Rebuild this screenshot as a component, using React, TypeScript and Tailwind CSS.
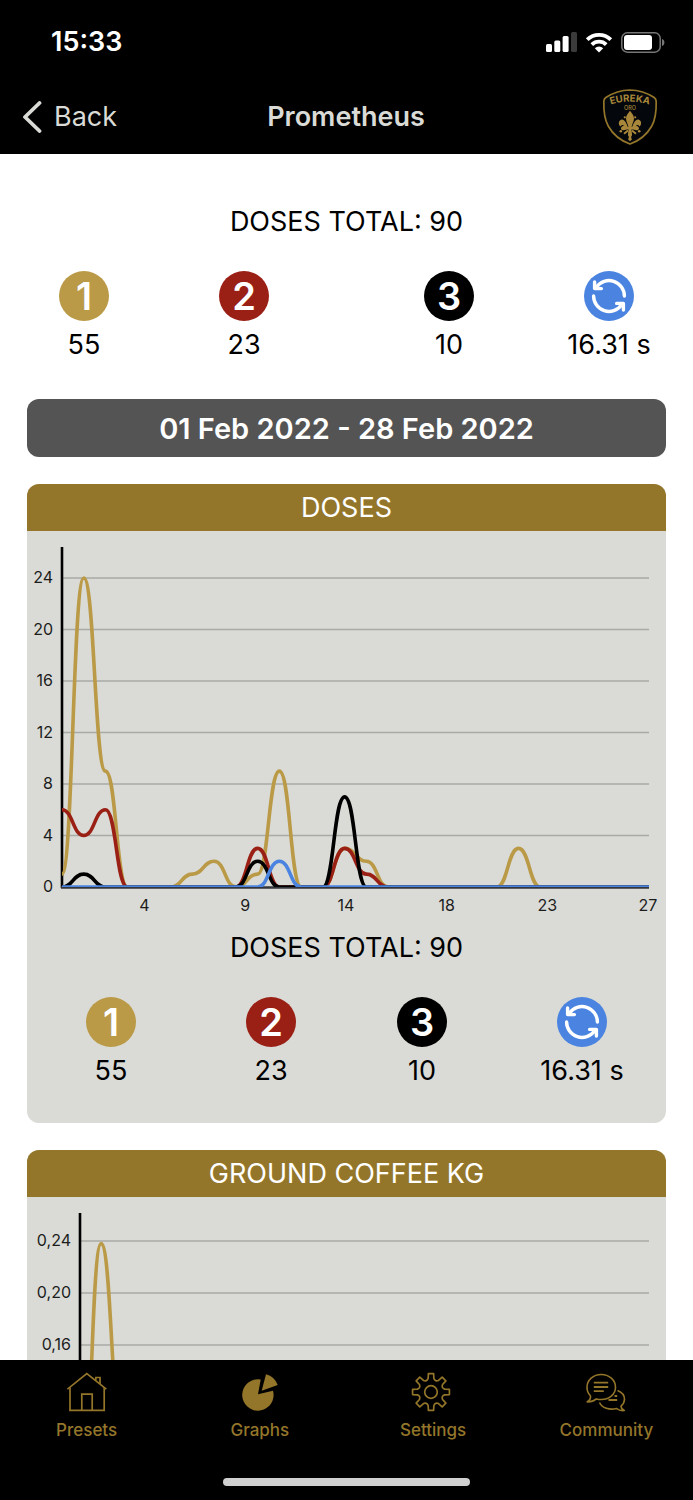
import type { ReactNode } from "react";

const GOLD = "#94762a";

type Series = { color: string; values: number[] };

// 28 days, only the days with a value are listed
const days = (filled: Record<number, number>) =>
  Array.from({ length: 28 }, (_, i) => filled[i] ?? 0);

const doses: Series[] = [
  {
    color: "#ba9a46",
    values: days({ 0: 1, 1: 24, 2: 9, 6: 1, 7: 2, 9: 1, 10: 9, 13: 3, 14: 2, 21: 3 }),
  },
  { color: "#9a1f15", values: days({ 0: 6, 1: 4, 2: 6, 9: 3, 13: 3, 14: 1 }) },
  { color: "#000000", values: days({ 1: 1, 9: 2, 13: 7 }) },
  { color: "#4a84e0", values: days({ 10: 2 }) },
];

const groundCoffee: Series[] = [
  {
    color: "#ba9a46",
    values: days({ 0: 0.01, 1: 0.238, 2: 0.09, 6: 0.01, 7: 0.02, 9: 0.01, 10: 0.09, 13: 0.03, 14: 0.02, 21: 0.03 }),
  },
];

const xLabels = ["4", "9", "14", "18", "23", "27"];

type ChartProps = {
  id: string;
  title: string;
  left: number;
  top: number;
  max: number;
  ticks: string[];
  series: Series[];
};

const Chart = ({ id, title, left, top, max, ticks, series }: ChartProps) => {
  const right = 622;
  const bottom = 356;
  const step = (right - left) / 27;
  const y = (v: number) => bottom - (v / max) * (bottom - top);

  const path = (values: number[]) =>
    values
      .map((v, i) => {
        const x = left + i * step;
        if (i === 0) return `M${x} ${y(v)}`;
        const mid = x - step / 2;
        return `C${mid} ${y(values[i - 1])} ${mid} ${y(v)} ${x} ${y(v)}`;
      })
      .join("");

  return (
    <svg viewBox="0 0 639 399" className="block w-full" role="img" aria-label={title}>
      <clipPath id={id}>
        <rect x={left} y="0" width={right - left} height={bottom} />
      </clipPath>
      {ticks.map((tick, i) => {
        const ty = bottom - ((bottom - top) / 6) * i;
        return (
          <g key={tick}>
            {i > 0 && (
              <line x1={left} x2={right} y1={ty} y2={ty} stroke="#a9aaa6" strokeWidth="1.3" />
            )}
            <text x={left - 9} y={ty + 5} textAnchor="end" fontSize="16" fill="#1c1c1c">
              {tick}
            </text>
          </g>
        );
      })}
      <path d={`M${left} 16V${bottom + 1}`} stroke="#000" strokeWidth="2.6" />
      <path d={`M${left - 1} ${bottom + 0.5}H${right}`} stroke="#33363c" strokeWidth="2.4" />
      <g clipPath={`url(#${id})`} fill="none" strokeWidth="3.6">
        {series.map((s) => (
          <path key={s.color} d={path(s.values)} stroke={s.color} />
        ))}
      </g>
      {xLabels.map((label, i) => (
        <text
          key={label}
          x={621 - (5 - i) * 100.7}
          y="380"
          textAnchor="middle"
          fontSize="16"
          fill="#1c1c1c"
        >
          {label}
        </text>
      ))}
    </svg>
  );
};

const RefreshIcon = () => (
  <svg
    viewBox="0 0 50 50"
    className="size-[50px]"
    fill="none"
    stroke="#fff"
    strokeWidth="3.4"
    strokeLinecap="round"
    strokeLinejoin="round"
    aria-hidden="true"
  >
    <path d="M40.4 25A15.4 15.4 0 0 0 12.5 16" />
    <path d="M10.600 11v6.600h6.800" />
    <path d="M9.600 25A15.4 15.4 0 0 0 37.500 34" />
    <path d="M39.400 39v-6.600h-6.800" />
  </svg>
);

const Stat = ({ color, icon, value }: { color: string; icon: ReactNode; value: string }) => (
  <div className="flex w-[88px] flex-col items-center gap-1.5">
    <div
      className={`flex size-[50px] items-center justify-center rounded-full text-[38px] font-semibold text-white ${color}`}
    >
      {icon}
    </div>
    <span className="leading-9 whitespace-nowrap">{value}</span>
  </div>
);

const Summary = () => (
  <div className="text-[27px] text-black">
    <p className="text-center leading-9">DOSES TOTAL: 90</p>
    <div className="mt-[31px] flex justify-between px-10">
      <div className="flex w-[248px] justify-between">
        <Stat color="bg-[#ba9a46]" icon="1" value="55" />
        <Stat color="bg-[#9a1f15]" icon="2" value="23" />
      </div>
      <div className="flex w-[248px] justify-between">
        <Stat color="bg-black" icon="3" value="10" />
        <Stat color="bg-[#4a84e0]" icon={<RefreshIcon />} value="16.31 s" />
      </div>
    </div>
  </div>
);

const Card = ({ title, children }: { title: string; children: ReactNode }) => (
  <section className="mx-[27px] mt-[27px] overflow-hidden rounded-xl bg-[#dadbd6] pb-[34px]">
    <h2 className="flex h-[47px] items-center justify-center bg-[#94762a] pt-0.5 text-[27px] text-white">
      {title}
    </h2>
    {children}
  </section>
);

const StatusBar = () => (
  <div className="flex h-[84px] items-center justify-between pr-7 pl-[51px]">
    <span className="text-[27px] font-semibold text-white">15:33</span>
    <div className="flex items-center gap-2">
      <svg viewBox="0 0 31 20" className="h-5 w-[31px]" fill="#fff" aria-hidden="true">
        <rect x="0" y="12" width="6" height="8" rx="1.5" />
        <rect x="8.3" y="8.5" width="6" height="11.5" rx="1.5" />
        <rect x="16.6" y="4" width="6" height="16" rx="1.5" />
        <rect x="25" y="0" width="6" height="20" rx="1.5" fill="#3b3b3b" />
      </svg>
      <svg viewBox="0 0 28 21" className="h-[21px] w-7" fill="none" aria-hidden="true">
        <g stroke="#fff" strokeWidth="3.8">
          <path d="M2.2 7.7a17 17 0 0 1 23.6 0" />
          <path d="M6.8 12.6a10.4 10.4 0 0 1 14.4 0" />
        </g>
        <path d="M14 20.6l-4.2-4.3a6 6 0 0 1 8.4 0z" fill="#fff" />
      </svg>
      <svg viewBox="0 0 44 21" className="h-[21px] w-11" aria-hidden="true">
        <rect x="0.8" y="0.8" width="38.4" height="19.4" rx="5.5" fill="none" stroke="#767676" strokeWidth="1.5" />
        <rect x="3" y="3" width="28" height="15" rx="3" fill="#fff" />
        <path d="M41 7c1.6.5 2.4 1.8 2.4 3.5s-.8 3-2.4 3.5z" fill="#767676" />
      </svg>
    </div>
  </div>
);

const Shield = () => (
  <svg viewBox="0 0 56 58" className="h-[58px] w-14" fill="#a8873a" role="img" aria-label="Eureka Oro">
    <path
      d="M28 2C19 2.2 10 5.5 3.8 9.5C2.2 10.6 1.8 11.6 1.8 13.5C1.6 22 2.4 31 6.2 38C11 46.5 18 52.5 28 56C38 52.5 45 46.5 49.8 38C53.6 31 54.4 22 54.2 13.5C54.2 11.6 53.8 10.6 52.2 9.5C46 5.5 37 2.2 28 2Z"
      fill="#04070b"
      stroke="#94762a"
      strokeWidth="1.7"
    />
    <path id="crest" d="M6 17.600Q28 9.600 50 17.600" fill="none" />
    <text fontSize="9.6" fontWeight="700" textAnchor="middle">
      <textPath href="#crest" startOffset="50%">
        EUREKA
      </textPath>
    </text>
    <text x="28" y="21.6" fontSize="5.5" fontWeight="500" textAnchor="middle">
      ORO
    </text>
    <path d="M28 22.800C30.500 26 32 28 32 30.500C32 33.500 30 36 29.600 39H26.400C26 36 24 33.500 24 30.500C24 28 25.500 26 28 22.800Z" />
    <path d="M26.200 40C24.500 35 22.500 31 19.600 31.500C16.400 32.200 16 36.800 18.500 38.400C19.600 36.800 21.400 36.600 22.300 37.500C19.500 38 17.800 40.500 20 42C22.500 42.800 24.500 41.500 26.200 40Z" />
    <path d="M29.800 40C31.500 35 33.500 31 36.400 31.500C39.600 32.200 40 36.800 37.500 38.400C36.400 36.800 34.600 36.600 33.700 37.500C36.500 38 38.200 40.500 36 42C33.500 42.800 31.500 41.500 29.800 40Z" />
    <path d="M22 39h12v2.500h-12z" />
    <path d="M26.600 41h2.800l.7 6-1 2 .8 2.600L28 53.300l-1.900-1.700.8-2.600-1-2z" />
    <path d="M26 42.500l-4 3.300M30 42.500l4 3.300" stroke="#a8873a" strokeWidth="2" />
    <circle cx="18.800" cy="43.200" r="1.300" />
    <circle cx="37.200" cy="43.200" r="1.300" />
    <circle cx="22.800" cy="29.300" r="1.100" />
    <circle cx="33.200" cy="29.300" r="1.100" />
  </svg>
);

const NavBar = () => (
  <nav className="grid h-[68px] grid-cols-3 items-center pr-[35px] pb-0.5 pl-[22px] text-[27px] text-[#dadbd6]">
    <button type="button" className="flex items-center gap-3 justify-self-start">
      <svg
        viewBox="0 0 20 32"
        className="h-8 w-5"
        fill="none"
        stroke="currentColor"
        strokeWidth="3.8"
        strokeLinecap="round"
        strokeLinejoin="round"
        aria-hidden="true"
      >
        <path d="M17.5 2L3 16l14.5 14" />
      </svg>
      Back
    </button>
    <h1 className="justify-self-center pl-3 font-semibold">Prometheus</h1>
    <div className="justify-self-end">
      <Shield />
    </div>
  </nav>
);

const HomeIcon = () => (
  <svg viewBox="0 0 40 40" className="size-10" fill="none" stroke={GOLD} strokeWidth="1.7" aria-hidden="true">
    <path d="M.4 17.2L19.800 1.600L39.300 17.200" />
    <path d="M3 15.500V38.300H37.200V15.500" />
    <path d="M14.800 38.300V22.200H25.200V38.300" />
    <path d="M28.800 8.500V5.500H33V12" />
  </svg>
);

const PieIcon = () => (
  <svg viewBox="0 0 40 40" className="size-10" fill={GOLD} aria-hidden="true">
    <path d="M18 22.3L20.700 7.500A15.700 15.700 0 1 0 33 18.700Z" />
    <path d="M21.700 18.800L26 2.200A17 17 0 0 1 37.700 13Z" />
  </svg>
);

const gearPath = () => {
  const pt = (deg: number, r: number) => {
    const a = (deg * Math.PI) / 180;
    return `${(18 + r * Math.sin(a)).toFixed(2)} ${(20 - r * Math.cos(a)).toFixed(2)}`;
  };
  let d = "";
  for (let i = 0; i < 8; i++) {
    const c = i * 45;
    d += `${i === 0 ? "M" : "L"}${pt(c - 8, 18.6)}L${pt(c + 8, 18.6)}L${pt(c + 12, 13.8)}`;
    d += `Q${pt(c + 22.5, 11)} ${pt(c + 33, 13.8)}`;
  }
  return d + "Z";
};

const GearIcon = () => (
  <svg viewBox="0 0 40 40" className="size-10 overflow-visible" fill="none" stroke={GOLD} strokeWidth="1.7" strokeLinejoin="round" aria-hidden="true">
    <path d={gearPath()} />
    <circle cx="18" cy="20" r="6.3" />
  </svg>
);

const ChatIcon = () => (
  <svg viewBox="0 0 40 40" className="size-10" fill="none" stroke={GOLD} strokeWidth="1.6" strokeLinejoin="round" aria-hidden="true">
    <path d="M4.500 24C2.300 21.700 1 18.600 1 15.300C1 8 7.400 2.500 15.200 2.500S29.500 8 29.500 15.300S23 27.500 15.200 27.500C13.500 27.500 11.800 27.300 10.300 26.900C7.500 29.300 4.500 30.100 1.100 29.900C3.700 28.500 4.800 26.500 4.500 24Z" />
    <path d="M31.500 18.500C35.500 20 38.500 23.500 38.500 27.300C38.500 30 37.200 32.300 35 34.200C35.100 36.200 36.200 37.500 38.300 38.500C35 39 32.500 38 30.700 36.500C23.500 38.200 16 36.200 13.500 30.500" />
    <path d="M7.800 10.700H22.200M7.800 15H22.200M7.800 19.200H17.800" strokeWidth="1.8" />
    <path d="M28.500 24H31.200M22.500 28H31.200" strokeWidth="1.8" />
  </svg>
);

const tabs = [
  { label: "Presets", icon: <HomeIcon /> },
  { label: "Graphs", icon: <PieIcon /> },
  { label: "Settings", icon: <GearIcon /> },
  { label: "Community", icon: <ChatIcon /> },
];

const TabBar = () => (
  <footer className="flex shrink-0 flex-col items-center bg-black pt-3 pb-3.5">
    <nav className="grid w-full grid-cols-4">
      {tabs.map(({ label, icon }) => (
        <a
          key={label}
          href={`#${label.toLowerCase()}`}
          className="flex flex-col items-center gap-1.5 text-[17px] leading-6 font-medium text-[#94762a]"
        >
          {icon}
          {label}
        </a>
      ))}
    </nav>
    <div className="mt-9 h-2 w-[247px] rounded-full bg-[#d0d0d0]" />
  </footer>
);

export default function App() {
  return (
    <div className="flex h-screen flex-col bg-white font-['Inter',sans-serif]">
      <header className="shrink-0 bg-black pb-0.5">
        <StatusBar />
        <NavBar />
      </header>

      <main className="min-h-0 flex-1 overflow-y-auto pt-[50px] pb-7 [scrollbar-width:none]">
        <Summary />
        <div className="mt-9 px-[27px]">
          <button
            type="button"
            className="w-full rounded-xl bg-[#545454] pt-3 pb-2.5 text-[29px] leading-9 font-semibold text-white"
          >
            01 Feb 2022 - 28 Feb 2022
          </button>
        </div>
        <Card title="DOSES">
          <Chart
            id="doses"
            title="Doses per day"
            left={35}
            top={47}
            max={24}
            ticks={["0", "4", "8", "12", "16", "20", "24"]}
            series={doses}
          />
          <Summary />
        </Card>
        <Card title="GROUND COFFEE KG">
          <Chart
            id="ground"
            title="Ground coffee per day"
            left={53}
            top={44}
            max={0.24}
            ticks={["0,00", "0,04", "0,08", "0,12", "0,16", "0,20", "0,24"]}
            series={groundCoffee}
          />
        </Card>
      </main>

      <TabBar />
    </div>
  );
}
